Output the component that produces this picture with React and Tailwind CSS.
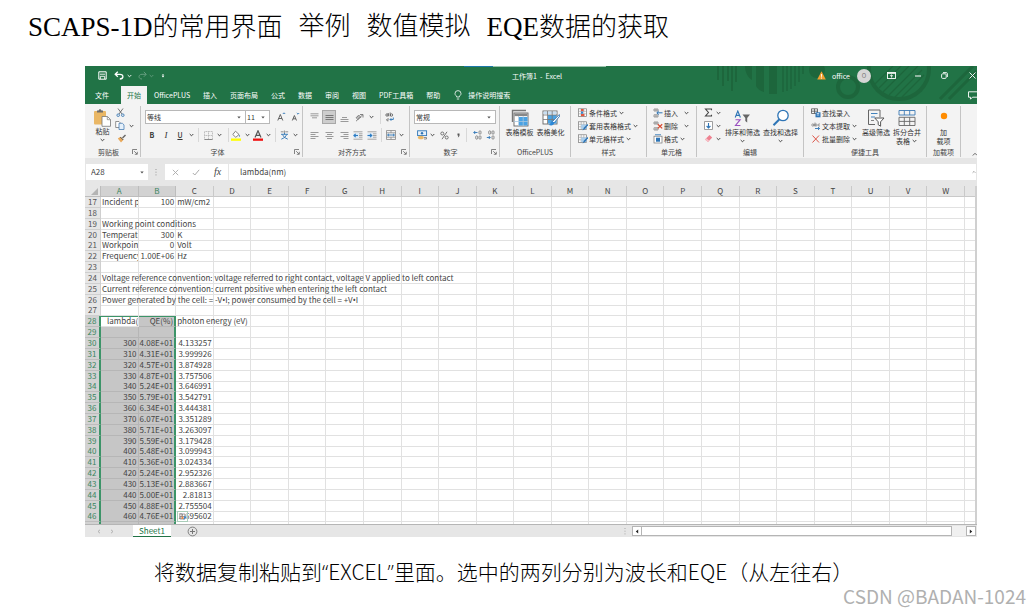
import React from "react";

const SHEET_FONT = "font-['Noto_Sans_CJK_SC','Noto_Sans',sans-serif]";

const COLUMNS = "ABCDEFGHIJKLMNOPQRSTUVW".split("");

const Dot = () => <span className="font-['Noto_Sans',sans-serif]">•</span>;

const ROWS = [
  { n: 17, a: "Incident p", b: "100", c: "mW/cm2" },
  { n: 18 },
  { n: 19, wide: "Working point conditions" },
  { n: 20, a: "Temperature", b: "300", c: "K" },
  { n: 21, a: "Workpoint", b: "0", c: "Volt" },
  { n: 22, a: "Frequency", b: "1.00E+06", c: "Hz" },
  { n: 23 },
  { n: 24, wide: "Voltage reference convention: voltage referred to right contact, voltage V applied to left contact" },
  { n: 25, wide: "Current reference convention: current positive when entering the left contact" },
  { n: 26, wide: <>Power generated by the cell: = -V<Dot />I; power consumed by the cell = +V<Dot />I</> },
  { n: 27 },
  { n: 28, a: "lambda(nm)", b: "QE(%)", c: "photon energy (eV)" },
  { n: 29 },
  ...[
    ["4.08", "4.133257"],
    ["4.31", "3.999926"],
    ["4.57", "3.874928"],
    ["4.87", "3.757506"],
    ["5.24", "3.646991"],
    ["5.79", "3.542791"],
    ["6.34", "3.444381"],
    ["6.07", "3.351289"],
    ["5.71", "3.263097"],
    ["5.59", "3.179428"],
    ["5.48", "3.099943"],
    ["5.36", "3.024334"],
    ["5.24", "2.952326"],
    ["5.13", "2.883667"],
    ["5.00", "2.81813"],
    ["4.88", "2.755504"],
    ["4.76", "2.695602"],
    ["4.66", "2.638249"],
  ].map(([b, c], i) => ({ n: 30 + i, a: String(300 + i * 10), b: b + "E+01", c, numeric: true })),
];

function Caret({ className = "w-2" }) {
  return (
    <span className={`flex shrink-0 justify-center ${className}`}>
      <svg width="5" height="4" viewBox="0 0 5 4" fill="none" stroke="currentColor" strokeWidth="0.9">
        <path d="M0.7 1 L2.5 2.8 L4.3 1" />
      </svg>
    </span>
  );
}

function Ico({ w = 10, h = 10, children, className = "" }) {
  return (
    <svg width={w} height={h} viewBox={`0 0 ${w} ${h}`} fill="none" className={`shrink-0 ${className}`} aria-hidden="true">
      {children}
    </svg>
  );
}

function IconButton({ label, className = "w-3.5", height = "h-3.5", children }) {
  return (
    <button type="button" aria-label={label} className={`flex shrink-0 items-center justify-center ${height} ${className}`}>
      {children}
    </button>
  );
}

function Group({ label, className, launcher, children }) {
  return (
    <section className={`flex shrink-0 flex-col border-r border-[#c4c4c4] ${className}`}>
      <div className="flex flex-1">{children}</div>
      <div className="flex h-2.5 items-center justify-center text-[#444]">
        <span className="flex-1 text-center whitespace-nowrap">{label}</span>
        {launcher && (
          <button type="button" aria-label={label + "设置"} className="mr-0.5">
            <Ico w={6} h={6}>
              <path d="M0.5 5V0.5H5M2.2 2.2L5 5M5.3 2.8V5.3H2.8" stroke="#666" strokeWidth="0.8" />
            </Ico>
          </button>
        )}
      </div>
    </section>
  );
}

function Divider({ className = "mx-0.5" }) {
  return <span className={`h-3.5 w-px shrink-0 bg-[#d8d8d8] ${className}`} />;
}

function Drop({ label, value, className }) {
  return (
    <div className={`relative flex h-3.5 items-center border border-[#b8b8b8] bg-white ${className}`}>
      <select aria-label={label} defaultValue={value} className="h-full w-full appearance-none bg-transparent pl-px text-[7px] leading-3 text-[#333] outline-none">
        <option>{value}</option>
      </select>
      <span className="pointer-events-none absolute right-1">
        <Ico w={4} h={3}>
          <path d="M0.3 0.6H3.7L2 2.5Z" fill="#555" />
        </Ico>
      </span>
    </div>
  );
}

function Lines({ widths, align = "start" }) {
  return (
    <Ico w={9} h={9}>
      {widths.map((w, i) => (
        <path key={i} d={`M${align === "start" ? 0.5 : align === "end" ? 8.5 - w : 4.5 - w / 2} ${1.5 + i * 2}h${w}`} stroke="#9a9a9a" strokeWidth="1" />
      ))}
    </Ico>
  );
}

function Indent({ flip }) {
  return (
    <Ico w={10} h={9}>
      <path d="M0.5 0.8H9.5M0.5 8.2H9.5M6 2.8H9.5M6 4.5H9.5M6 6.2H9.5" stroke="#9a9a9a" strokeWidth="0.9" />
      <rect x="0.5" y="2.2" width="5" height="4.6" fill="#d5e6f5" />
      <path d={flip ? "M0.5 4.5H4.5M3 2.8L4.8 4.5L3 6.2" : "M5 4.5H1M2.7 2.8L0.9 4.5L2.7 6.2"} stroke="#2b7cc4" strokeWidth="1.1" />
    </Ico>
  );
}

function TableIcon({ brush }) {
  return (
    <Ico w={18} h={18}>
      {!brush && <path d="M1.5 13V1.5H15" stroke="#777" strokeWidth="1.4" />}
      <rect x={brush ? 1 : 3} y={brush ? 2 : 4} width="14" height="13" fill="#fff" stroke="#666" strokeWidth="0.9" />
      <rect x={brush ? 1.5 : 3.5} y={brush ? 2.5 : 4.5} width="13" height="2.6" fill={brush ? "#c9dff2" : "#888"} />
      <rect x={brush ? 6 : 8} y={brush ? 6 : 8} width="8.5" height="8.5" fill="#4ba3e3" />
      <path d={brush ? "M5.5 2V15M10.2 2V15M1 6H15M1 10.5H15" : "M7.5 7V17M12.2 7V17M3 12.5H17"} stroke={brush ? "#777" : "#a8c6de"} strokeWidth="0.8" />
      {brush && (
        <>
          <path d="M17.3 5.5L10.5 12.5L12 14L17.8 7Z" fill="#fff" stroke="#3d7ab5" strokeWidth="0.9" />
          <path d="M10.5 12.2C8.5 12.5 9 15 6.5 15.8C9 17 12 16.5 12.2 14Z" fill="#2b88d8" />
        </>
      )}
    </Ico>
  );
}

function StyleIcon({ kind }) {
  return (
    <Ico w={10} h={10}>
      <rect x="0.5" y="0.8" width="8" height="7.6" fill="#fff" stroke="#777" strokeWidth="0.7" />
      <path d="M0.5 3.3H8.5M0.5 5.8H8.5M3.2 0.8V8.4M5.8 0.8V8.4" stroke="#999" strokeWidth="0.6" />
      {kind === "cond" ? (
        <>
          <path d="M3 1H5.6V3.2H3Z" fill="#e0563f" />
          <path d="M3 3.5H5V5.7H3Z" fill="#3b86cc" />
          <path d="M3 6H6.4V8.2H3Z" fill="#e0563f" />
        </>
      ) : (
        <>
          <path d="M3.2 3.5H8.5V8H3.2Z" fill="#a9cdec" />
          <path d="M9.7 2.8L5.8 6.8L4.6 9.4L7 8L9.9 4.2Z" fill="#2e75b6" />
        </>
      )}
    </Ico>
  );
}

function CellIcon({ kind }) {
  return (
    <Ico w={10} h={10}>
      {kind !== "format" && <path d="M1 1H5V3H1ZM1 6.8H5V9H1ZM3 1V3M3 6.8V9" stroke="#777" strokeWidth="0.7" />}
      {kind === "insert" && <path d="M9.5 4.8H4M5.8 3L3.8 4.8L5.8 6.6" stroke="#2e75b6" strokeWidth="1" />}
      {kind === "delete" && <path d="M4.8 3.2L9.2 7.4M9.2 3.2L4.8 7.4" stroke="#d9472b" strokeWidth="1.2" />}
      {kind === "format" && (
        <>
          <path d="M2 0.8H8" stroke="#2e75b6" strokeWidth="0.9" />
          <rect x="1" y="2.2" width="8" height="6.8" stroke="#777" strokeWidth="0.7" fill="#fff" />
          <rect x="3" y="3.7" width="4" height="4" fill="#2e75b6" />
        </>
      )}
    </Ico>
  );
}

function MenuRow({ icon, text, caret = true, caretClass }) {
  return (
    <button type="button" className="flex h-[13px] items-center whitespace-nowrap">
      {icon}
      <span className="ml-px">{text}</span>
      {caret && <Caret className={caretClass} />}
    </button>
  );
}

function BigButton({ icon, text, caret, className = "" }) {
  return (
    <button type="button" className={`flex flex-col items-center ${className}`}>
      <span className="flex h-5 items-center">{icon}</span>
      <span className="h-2 leading-2 whitespace-nowrap">{text}</span>
      {caret && <span className="flex h-2.5 items-center"><Caret /></span>}
    </button>
  );
}

function Backdrop() {
  return (
    <svg className="pointer-events-none absolute top-0 right-0" width="262" height="38" viewBox="0 0 262 38" fill="none" aria-hidden="true">
      <g stroke="#1d663c" strokeWidth="2">
        <path d="M3 0V14M8 0V20M13 0V15M17 0V25M21 0V16" />
      </g>
      <path d="M68 0V26M72 0V25M76 0V23M80 0V20M84 0V16M88 0V8" stroke="#1d663c" strokeWidth="1.5" />
      <path d="M30 0H37V14C33 12 30 6 30 0ZM41 0H49V26C45 25 42 22 41 20ZM54 0H62V28H54Z" fill="#1d663c" />
      <circle cx="102" cy="4" r="8" fill="#1d663c" />
      <circle cx="133" cy="21" r="10" stroke="#1d663c" strokeWidth="4" />
      <circle cx="184" cy="3" r="30" stroke="#1d663c" strokeWidth="4" />
      <g stroke="#1d663c" strokeWidth="1.2">
        <path d="M160 18L178 0M164 22L186 0M168 26L194 0M174 29L203 0M180 31L207 4M187 31L209 9" />
        <path d="M225 33L258 0M234 33L262 5" strokeWidth="3" />
      </g>
    </svg>
  );
}

function TitleBar() {
  return (
    <header className="relative flex h-[18px] items-center pt-px text-white">
      <div className="flex flex-1 items-center pl-3">
        <IconButton label="保存" className="w-2.5">
          <Ico w={9} h={9}>
            <path d="M0.8 0.8H8.2V8.2H0.8Z" stroke="#fff" />
            <path d="M2.3 8V5.3H6.7V8M2 3.2H7" stroke="#fff" strokeWidth="0.9" />
          </Ico>
        </IconButton>
        <IconButton label="撤消" className="ml-1.5 w-3">
          <Ico w={10} h={9}>
            <path d="M3.8 0.8L1.2 3.3L3.8 5.8M1.4 3.3H6C10 3.3 9.8 8 5.8 8" stroke="#fff" strokeWidth="1.3" />
          </Ico>
        </IconButton>
        <Caret className="w-2" />
        <IconButton label="恢复" className="ml-1 w-2.5 opacity-30">
          <Ico w={9} h={9}>
            <path d="M5.8 0.8L8.3 3.3L5.8 5.8M8 3.3H4C0 3.3 0 8 4 8" stroke="#fff" />
          </Ico>
        </IconButton>
        <Caret className="w-2 opacity-30" />
        <IconButton label="自定义快速访问工具栏" className="ml-1 w-2">
          <Ico w={4} h={4}>
            <path d="M1 0.5H3M1 1.8H3L2 3.2Z" stroke="#fff" strokeWidth="0.5" fill="#fff" />
          </Ico>
        </IconButton>
      </div>
      <div className="absolute top-0 left-[379px] h-px w-[29px] bg-[#1b78a8]" />
      <div className="absolute top-0 left-[408px] h-px w-[113px] bg-[#9cc5ae]" />
      <h2 className="text-[7px] whitespace-pre">工作簿1  -  Excel</h2>
      <div className="relative flex flex-1 items-center justify-end">
        <Ico w={9} h={9}>
          <path d="M4.5 0.3L8.8 8.5H0.2Z" fill="#f0a030" />
          <path d="M4.5 3V5.8M4.5 6.5V7.6" stroke="#fff" strokeWidth="0.9" />
        </Ico>
        <span className="ml-1.5 w-[21px] text-[7px]">office</span>
        <span className="ml-1 flex size-3.5 items-center justify-center rounded-full bg-[#d6d6d6] text-[6px] text-[#777]">O</span>
        <IconButton label="功能区显示选项" className="ml-3.5 w-3">
          <Ico w={9} h={7}>
            <rect x="0.5" y="0.5" width="8" height="6" stroke="#fff" strokeWidth="0.9" />
            <path d="M0.5 1.5H8.5M4.5 5.6V3M3 4.2L4.5 2.8L6 4.2" stroke="#fff" strokeWidth="0.8" />
          </Ico>
        </IconButton>
        <IconButton label="最小化" className="ml-3.5 w-3.5">
          <Ico w={6} h={2}><path d="M0 1H6" stroke="#fff" /></Ico>
        </IconButton>
        <IconButton label="向下还原" className="ml-3 w-3.5">
          <Ico w={7} h={7}>
            <rect x="0.6" y="1.8" width="4.6" height="4.6" rx="1" stroke="#fff" strokeWidth="0.9" />
            <path d="M2 0.6H5.2Q6.4 0.6 6.4 1.8V5" stroke="#fff" strokeWidth="0.9" />
          </Ico>
        </IconButton>
        <IconButton label="关闭" className="ml-4 w-2.5">
          <Ico w={7} h={7}><path d="M0.5 0.5L6.5 6.5M6.5 0.5L0.5 6.5" stroke="#fff" strokeWidth="0.9" /></Ico>
        </IconButton>
      </div>
    </header>
  );
}

function Tabs() {
  const rest = ["OfficePLUS", "插入", "页面布局", "公式", "数据", "审阅", "视图", "PDF工具箱", "帮助"];
  return (
    <nav className="relative flex h-5 items-stretch pt-0.5 text-white">
      <button type="button" className="w-9 pr-0.5">文件</button>
      <button type="button" className="mr-px w-[26px] bg-[#f3f3f3] text-[#217346]">开始</button>
      <div className="flex gap-px">
        {rest.map((t) => (
          <button type="button" key={t} className="px-1.5 whitespace-nowrap">{t}</button>
        ))}
      </div>
      <button type="button" className="ml-2 flex items-center gap-1.5 whitespace-nowrap">
        <Ico w={8} h={10}>
          <path d="M2.6 7V6.2C1.6 5.5 1 4.7 1 3.6A3 3 0 0 1 7 3.6C7 4.7 6.4 5.5 5.4 6.2V7ZM2.8 9H5.2" stroke="#fff" strokeWidth="0.8" />
        </Ico>
        操作说明搜索
      </button>
      <button type="button" aria-label="批注" className="ml-auto">
        <Ico w={9} h={9}><path d="M0.5 0.8H9M0.5 0.8V6.2H2.5V8.2L4.5 6.2H9" stroke="#fff" strokeWidth="0.9" /></Ico>
      </button>
    </nav>
  );
}

function Ribbon() {
  return (
    <div className="flex h-[54px] overflow-hidden bg-[#f3f3f3] pt-0.5 pb-px text-[#333]">
      <Group label="剪贴板" launcher className="w-14">
        <BigButton
          className="ml-2 w-[19px] pt-px"
          text="粘贴"
          caret
          icon={
            <Ico w={19} h={19}>
              <rect x="1" y="3" width="12" height="13.5" rx="1" fill="#eab765" />
              <path d="M4 4.5V2.5H5.5Q7 -0.5 8.5 2.5H10V4.5Z" fill="#6c6c6c" />
              <path d="M9 8.5H14.5L17.5 11.5V18.3H9Z" fill="#fff" stroke="#777" strokeWidth="0.8" />
              <path d="M14.3 8.7V11.7H17.3" stroke="#777" strokeWidth="0.7" />
            </Ico>
          }
        />
        <div className="ml-[3px] flex flex-col">
          <IconButton label="剪切" height="h-[13px]" className="w-2.5">
            <Ico w={9} h={9}>
              <path d="M2 0.5L6 6M7 0.5L3 6" stroke="#666" strokeWidth="0.9" />
              <circle cx="2.2" cy="7.2" r="1.3" stroke="#3d7ab5" strokeWidth="0.9" />
              <circle cx="6.8" cy="7.2" r="1.3" stroke="#3d7ab5" strokeWidth="0.9" />
            </Ico>
          </IconButton>
          <IconButton label="复制" height="h-[13px]" className="w-5 gap-0.5">
            <Ico w={10} h={9}>
              <path d="M0.7 0.5H4L5 1.5V6.5H0.7Z" fill="#fff" stroke="#777" strokeWidth="0.8" />
              <path d="M4 2.3H7.4L9 3.9V8.5H4Z" fill="#e5f0fa" stroke="#4a7fb5" strokeWidth="0.8" />
            </Ico>
            <Caret />
          </IconButton>
          <IconButton label="格式刷" height="h-[13px]" className="w-3">
            <Ico w={9} h={9}>
              <path d="M8.5 1L5.5 4" stroke="#666" strokeWidth="1.5" />
              <path d="M3.5 2.8L6.5 5.8L4 8.5L0.8 4.6Z" fill="#e8a85a" />
              <path d="M3.3 3L6.3 6" stroke="#555" />
            </Ico>
          </IconButton>
        </div>
      </Group>

      <Group label="字体" launcher className="w-[162px]">
        <div className="flex flex-col gap-1 pt-1 pl-1">
          <div className="flex items-center">
            <Drop label="字体" value="等线" className="w-[101px]" />
            <Drop label="字号" value="11" className="w-6 border-l-0" />
            <IconButton label="增大字号" className="ml-1 w-3.5">
              <Ico w={9} h={10}>
                <path d="M0.8 8.5L3.3 2.5L5.8 8.5M1.7 6.5H4.9" stroke="#555" strokeWidth="0.9" />
                <path d="M5.8 2L7 0.8L8.2 2" stroke="#2e75b6" strokeWidth="0.9" />
              </Ico>
            </IconButton>
            <IconButton label="减小字号">
              <Ico w={9} h={10}>
                <path d="M1.3 8.5L3.4 3.5L5.5 8.5M2 6.8H4.8" stroke="#555" strokeWidth="0.9" />
                <path d="M5.8 1L7 2.2L8.2 1" stroke="#2e75b6" strokeWidth="0.9" />
              </Ico>
            </IconButton>
          </div>
          <div className="flex items-center">
            <IconButton label="加粗"><b>B</b></IconButton>
            <IconButton label="倾斜"><i className="font-['Liberation_Serif',serif] text-[9px]">I</i></IconButton>
            <IconButton label="下划线"><u className="font-medium">U</u></IconButton>
            <Caret />
            <Divider className="mx-[3px]" />
            <IconButton label="边框" className="w-3">
              <Ico w={9} h={9}>
                <path d="M0.5 0.5H8.5V8.5H0.5ZM4.5 0.5V8.5M0.5 4.5H8.5" stroke="#aaa" strokeWidth="0.8" strokeDasharray="1 0.6" />
                <path d="M0.5 8.5H8.5" stroke="#777" strokeWidth="0.8" />
              </Ico>
            </IconButton>
            <Caret className="w-2.5" />
            <Divider className="mr-0.5 ml-1" />
            <IconButton label="填充颜色" className="w-2.5">
              <Ico w={10} h={11}>
                <path d="M4.5 1.2L8 4.5L4.8 7.3L1.8 4.5Z" fill="#fff" stroke="#666" strokeWidth="0.8" />
                <path d="M8.3 4.2Q9.8 6.5 8.6 7Q7.8 6.7 8.3 4.2" fill="#2e75b6" />
                <rect y="8.5" width="10" height="2.3" fill="#ffff00" />
              </Ico>
            </IconButton>
            <Caret className="w-3" />
            <IconButton label="字体颜色" className="w-2.5">
              <Ico w={10} h={11}>
                <path d="M2 7.5L5 0.8L8 7.5M3 5.3H7" stroke="#555" strokeWidth="1.2" />
                <rect y="8.5" width="10" height="2.3" fill="#f01010" />
              </Ico>
            </IconButton>
            <Caret className="w-2.5" />
            <Divider className="mr-px ml-0.5" />
            <IconButton label="拼音" className="ml-0.5 w-2.5">
              <Ico w={9} h={10}>
                <path d="M0.8 1.8H3.5M5.3 1.8H8.2M4.4 0.5V3" stroke="#777" strokeWidth="0.8" />
                <path d="M1 4.3H8M4.5 3V4.3M6.8 4.5Q5.5 8 1.3 9.2M2.4 4.5Q3.8 8 7.8 9.2" stroke="#2e75b6" strokeWidth="0.9" />
              </Ico>
            </IconButton>
            <Caret className="w-3" />
          </div>
        </div>
      </Group>

      <Group label="对齐方式" launcher className="w-[107px]">
        <div className="flex flex-col gap-1 pt-1 pl-1">
          <div className="flex items-center gap-px">
            <IconButton label="顶端对齐"><Ico w={9} h={9}><path d="M0.5 0.8H8.5M0.5 2.8H8.5M2 4.8H7" stroke="#9a9a9a" /></Ico></IconButton>
            <IconButton label="垂直居中" className="w-3.5 border border-[#a8a8a8] bg-[#cdcdcd]"><Ico w={9} h={9}><path d="M0.5 2.5H8.5M0.5 4.5H8.5M0.5 6.5H8.5" stroke="#777" /></Ico></IconButton>
            <IconButton label="底端对齐"><Ico w={9} h={9}><path d="M2 4.5H7M0.5 6.5H8.5M0.5 8.5H8.5" stroke="#9a9a9a" /></Ico></IconButton>
            <IconButton label="方向">
              <Ico w={9} h={9}>
                <path d="M1 8.2L8 1.5M8 4.5V1.5H5M1 4.8L3.8 2L6 5" stroke="#777" strokeWidth="0.9" />
                <circle cx="3" cy="5" r="1.3" stroke="#777" strokeWidth="0.8" />
              </Ico>
            </IconButton>
            <Caret className="w-2" />
            <Divider className="mr-0.5 ml-1" />
            <IconButton label="自动换行" className="w-2.5">
              <Ico w={9} h={10}>
                <circle cx="2" cy="3" r="1.2" stroke="#555" strokeWidth="0.8" />
                <path d="M3.3 1V4.3M5.2 0.5V4.3M4 7H2.2Q1 7.8 2.2 8.8H3.5" stroke="#555" strokeWidth="0.8" />
                <circle cx="6.5" cy="3" r="1.2" stroke="#555" strokeWidth="0.8" />
                <path d="M8.3 5.5V7.5H5M6.3 6.2L5 7.5L6.3 8.8" stroke="#2e75b6" strokeWidth="0.9" />
              </Ico>
            </IconButton>
          </div>
          <div className="flex items-center gap-px">
            <IconButton label="左对齐"><Lines widths={[8, 5, 8, 5]} /></IconButton>
            <IconButton label="居中"><Lines widths={[8, 5, 8, 5]} align="center" /></IconButton>
            <IconButton label="右对齐"><Lines widths={[8, 5, 8, 5]} align="end" /></IconButton>
            <IconButton label="减少缩进量" className="w-3"><Indent /></IconButton>
            <IconButton label="增加缩进量" className="w-3.5"><Indent flip /></IconButton>
            <Divider className="mr-0 ml-px" />
            <IconButton label="合并后居中" className="ml-[3px] w-2.5">
              <Ico w={10} h={10}>
                <path d="M0.5 0.5H9.5V9.5H0.5ZM0.5 2.8H9.5M0.5 7.2H9.5M5 0.5V2.8M5 7.2V9.5" stroke="#888" strokeWidth="0.8" />
                <path d="M1.5 5H8.5M3 3.8L1.6 5L3 6.2M7 3.8L8.4 5L7 6.2" stroke="#2e75b6" strokeWidth="0.9" />
              </Ico>
            </IconButton>
            <Caret className="w-2" />
          </div>
        </div>
      </Group>

      <Group label="数字" launcher className="w-[90px]">
        <div className="flex flex-col gap-1 pt-1 pl-1">
          <Drop label="数字格式" value="常规" className="w-[82px]" />
          <div className="flex items-center">
            <IconButton label="会计数字格式" className="ml-0.5 w-3">
              <Ico w={11} h={10}>
                <rect x="0.6" y="0.8" width="9" height="4.8" fill="#e6f1fa" stroke="#2e75b6" strokeWidth="0.9" />
                <circle cx="5" cy="3.2" r="1.2" fill="#2e75b6" />
                <ellipse cx="3.8" cy="7.5" rx="3" ry="1.8" fill="#eab765" />
                <path d="M7 7.5H9.5V9H7" stroke="#777" strokeWidth="0.8" />
              </Ico>
            </IconButton>
            <Caret className="w-2" />
            <IconButton label="百分比样式" className="w-4">
              <Ico w={9} h={9}>
                <circle cx="2.3" cy="2.5" r="1.5" stroke="#666" strokeWidth="0.9" />
                <circle cx="6.7" cy="6.5" r="1.5" stroke="#666" strokeWidth="0.9" />
                <path d="M7 0.8L2 8.2" stroke="#666" strokeWidth="0.9" />
              </Ico>
            </IconButton>
            <IconButton label="千位分隔样式" className="w-3">
              <Ico w={3} h={5}><path d="M0.5 0.5H2.5V2.5Q2.3 4 0.8 4.6Q1.4 3.6 1.3 2.5H0.5Z" fill="#555" /></Ico>
            </IconButton>
            <Divider className="mr-1 ml-0.5" />
            <IconButton label="增加小数位数" className="w-3">
              <Ico w={9} h={10}>
                <path d="M4.5 2.5H0.8M2.2 1L0.8 2.5L2.2 4" stroke="#2e75b6" strokeWidth="0.9" />
                <rect x="6" y="0.8" width="2" height="3.4" rx="1" stroke="#777" strokeWidth="0.8" />
                <rect x="2.7" y="5.8" width="2" height="3.4" rx="1" stroke="#777" strokeWidth="0.8" />
                <rect x="6" y="5.8" width="2" height="3.4" rx="1" stroke="#777" strokeWidth="0.8" />
              </Ico>
            </IconButton>
            <IconButton label="减少小数位数" className="w-3.5">
              <Ico w={9} h={10}>
                <rect x="2.7" y="0.8" width="2" height="3.4" rx="1" stroke="#777" strokeWidth="0.8" />
                <rect x="6" y="0.8" width="2" height="3.4" rx="1" stroke="#777" strokeWidth="0.8" />
                <path d="M0.8 7.5H4.2M2.8 6L4.2 7.5L2.8 9" stroke="#2e75b6" strokeWidth="0.9" />
                <rect x="6" y="5.8" width="2" height="3.4" rx="1" stroke="#777" strokeWidth="0.8" />
              </Ico>
            </IconButton>
          </div>
        </div>
      </Group>

      <Group label="OfficePLUS" className="w-[71px]">
        <div className="flex flex-1 justify-center gap-[3px] pt-0.5">
          <BigButton text="表格模板" icon={<TableIcon />} />
          <BigButton text="表格美化" icon={<TableIcon brush />} />
        </div>
      </Group>

      <Group label="样式" className="w-[76px]">
        <div className="flex flex-col items-start pl-[7px]">
          <MenuRow icon={<StyleIcon kind="cond" />} text="条件格式" />
          <MenuRow icon={<StyleIcon />} text="套用表格格式" />
          <MenuRow icon={<StyleIcon />} text="单元格样式" />
        </div>
      </Group>

      <Group label="单元格" className="w-[50px]">
        <div className="flex flex-col items-start pl-1.5">
          <MenuRow icon={<CellIcon kind="insert" />} text="插入" caretClass="ml-1 w-2" />
          <MenuRow icon={<CellIcon kind="delete" />} text="删除" caretClass="ml-1 w-2" />
          <MenuRow icon={<CellIcon kind="format" />} text="格式" />
        </div>
      </Group>

      <Group label="编辑" className="w-[107px]">
        <div className="flex flex-col pl-1.5">
          <IconButton label="自动求和" height="h-[13px]" className="w-5 gap-0.5">
            <Ico w={9} h={9}><path d="M7.5 2.2V1H1.5L4.5 4.5L1.5 8H7.5V6.8" stroke="#444" strokeWidth="1.1" /></Ico>
            <Caret />
          </IconButton>
          <IconButton label="填充" height="h-[13px]" className="w-5 gap-0.5">
            <Ico w={9} h={9}>
              <rect x="0.6" y="0.6" width="7.8" height="7.8" fill="#fff" stroke="#888" strokeWidth="0.8" />
              <path d="M4.5 2V6.8M2.6 5L4.5 6.9L6.4 5" stroke="#2e75b6" strokeWidth="1.1" />
            </Ico>
            <Caret />
          </IconButton>
          <IconButton label="清除" height="h-[13px]" className="w-5 gap-0.5">
            <Ico w={9} h={9}>
              <path d="M5.5 1L8.2 3.5L4 8L1 5.5Z" fill="#ee8291" />
              <path d="M1 5.5L2.4 4.2L5.2 6.8L4 8Z" fill="#f8c2ca" />
            </Ico>
            <Caret />
          </IconButton>
        </div>
        <div className="flex gap-[3px] pt-0.5 pl-0.5">
          <BigButton
            text="排序和筛选"
            caret
            icon={
              <Ico w={17} h={17}>
                <path d="M1.2 7.5L3.8 1L6.4 7.5M2.1 5.4H5.5" stroke="#2e75b6" strokeWidth="1.1" />
                <path d="M1.5 9.7H6.2L1.5 15.5H6.4" stroke="#9a4fc0" strokeWidth="1.1" />
                <path d="M8.5 4.5H16L13.2 8V12.5L11.3 11V8Z" fill="#666" />
              </Ico>
            }
          />
          <BigButton
            text="查找和选择"
            caret
            icon={
              <Ico w={18} h={18}>
                <circle cx="11" cy="6.5" r="5.2" stroke="#2e75b6" strokeWidth="1.3" fill="#fff" />
                <path d="M7.2 10.5L1.5 16.3" stroke="#2e75b6" strokeWidth="2" />
              </Ico>
            }
          />
        </div>
      </Group>

      <Group label="便捷工具" className="w-[123px]">
        <div className="flex w-[58px] flex-col items-start pl-[7px]">
          <MenuRow
            text="查找录入"
            caret={false}
            icon={
              <Ico w={10} h={10}>
                <path d="M0.5 0.8H6.5V5.5H0.5ZM3.5 0.8V5.5M0.5 3.2H6.5" stroke="#555" strokeWidth="0.8" />
                <rect x="4.5" y="4.3" width="5" height="5" fill="#2e75b6" />
                <path d="M5.8 5.5H8.2M5.8 7H8.2" stroke="#fff" strokeWidth="0.7" />
              </Ico>
            }
          />
          <MenuRow
            text="文本提取"
            icon={
              <Ico w={10} h={10}>
                <circle cx="1.8" cy="4" r="1.1" stroke="#777" strokeWidth="0.7" />
                <circle cx="5" cy="4" r="1.1" stroke="#777" strokeWidth="0.7" />
                <path d="M3.1 2.8V5.3M4 1.5V5.3M9 3Q7 2.5 7 4Q7 5.5 9 5" stroke="#777" strokeWidth="0.7" />
                <path d="M4 7.5H8.5M7 6L8.6 7.5L7 9" stroke="#2e75b6" strokeWidth="0.9" />
              </Ico>
            }
          />
          <MenuRow
            text="批量删除"
            icon={<Ico w={10} h={10}><path d="M1.5 1.5L8 8.5M8 1.5L1.5 8.5" stroke="#dd5548" strokeWidth="1" /></Ico>}
          />
        </div>
        <div className="flex gap-[3px] pt-0.5">
          <BigButton
            text="高级筛选"
            icon={
              <Ico w={18} h={18}>
                <path d="M1.5 1H13V8M1.5 1V15.5H8" stroke="#666" strokeWidth="1" />
                <path d="M4 4.5H10.5M4 8H8" stroke="#2e75b6" strokeWidth="0.9" />
                <path d="M4 11.5H7" stroke="#777" strokeWidth="0.9" />
                <path d="M7.8 9H17L13.6 12.8V17.2L11.2 15.7V12.8Z" fill="#fff" stroke="#555" strokeWidth="1" />
              </Ico>
            }
          />
          <button type="button" className="flex flex-col items-center">
            <span className="flex h-5 items-center">
              <Ico w={18} h={18}>
                <path d="M1 1.5H17V6H1ZM6.3 1.5V6M11.7 1.5V6" stroke="#3d7ab5" strokeWidth="0.9" />
                <path d="M1 8.3H17V16.5H1ZM1 12.4H17M6.3 8.3V16.5M11.7 8.3V16.5" stroke="#666" strokeWidth="0.9" />
              </Ico>
            </span>
            <span className="h-2 leading-2 whitespace-nowrap">拆分合并</span>
            <span className="flex h-2.5 items-center">表格<Caret /></span>
          </button>
        </div>
      </Group>

      <Group label="加载项" className="w-[34px]">
        <button type="button" className="flex flex-1 flex-col items-center pt-0.5">
          <span className="flex h-5 items-center pb-1">
            <Ico w={8} h={8}><circle cx="4" cy="4" r="3.2" fill="#ff8c00" /></Ico>
          </span>
          <span className="h-2 leading-2">加</span>
          <span className="h-2.5">载项</span>
        </button>
      </Group>
      <div className="flex flex-1 items-end justify-end">
        <button type="button" aria-label="折叠功能区">
          <Ico w={5} h={5}><path d="M0.8 3.5L3 1.3L5 3.3" stroke="#555" strokeWidth="0.9" /></Ico>
        </button>
      </div>
    </div>
  );
}

function FormulaBar() {
  return (
    <div className={`flex h-7 items-center bg-[#e6e6e6] px-px ${SHEET_FONT}`}>
      <div className="relative flex h-4 w-[62px] items-center bg-white">
        <input aria-label="名称框" defaultValue="A28" className="w-full bg-transparent pl-[5px] text-[8px] leading-3 text-[#444] outline-none" />
        <span className="absolute right-1"><Ico w={4} h={3}><path d="M0.3 0.6H3.7L2 2.5Z" fill="#555" /></Ico></span>
      </div>
      <Ico w={2} h={8} className="ml-[7px]"><path d="M1 1V2M1 3.7V4.7M1 6.4V7.4" stroke="#999" /></Ico>
      <div className="ml-2 flex h-4 w-[63px] items-center justify-around bg-white">
        <button type="button" aria-label="取消"><Ico w={7} h={7}><path d="M0.8 0.8L6.2 6.2M6.2 0.8L0.8 6.2" stroke="#aaa" strokeWidth="0.9" /></Ico></button>
        <button type="button" aria-label="输入"><Ico w={8} h={7}><path d="M0.8 4L2.8 6L7.2 0.8" stroke="#aaa" strokeWidth="1" /></Ico></button>
        <button type="button" aria-label="插入函数" className="font-['Liberation_Serif',serif] text-[10px] leading-3 text-[#444] italic">fx</button>
      </div>
      <div className="ml-px flex h-4 flex-1 items-center bg-white">
        <input aria-label="编辑栏" defaultValue="lambda(nm)" className="w-full bg-transparent pl-[11px] text-[8px] leading-3 text-[#444] outline-none" />
        <Caret className="w-1 rotate-180 text-[#888]" />
      </div>
    </div>
  );
}

const ROW_GRID = "grid grid-cols-[16px_repeat(23,minmax(0,1fr))_10px]";
const CELL = "relative border-r border-b border-[#e1e1e1] px-px whitespace-nowrap";

function Row({ row }) {
  const selected = row.n >= 28;
  const fill = selected ? "bg-[#c6c6c6] !border-b-[#b6b6b6]" : "";
  const alignA = row.numeric ? "text-right" : "text-left";
  return (
    <tr className={`${ROW_GRID} min-h-0 flex-1`}>
      <th scope="row" className={`border-b text-center font-normal ${selected ? "border-r-2 border-[#bdbdbd] border-r-[#3c9468] bg-[#d2d2d2] text-[#3c8560]" : "border-r border-[#cfcfcf] bg-[#e6e6e6] text-[#555]"}`}>
        {row.n}
      </th>
      {row.wide ? (
        <td className={`${CELL} overflow-visible`}><span className="relative z-10">{row.wide}</span></td>
      ) : (
        <td className={`${CELL} overflow-hidden ${alignA} ${row.n === 28 ? "pl-1.5" : fill} ${selected && row.n !== 28 ? "!border-r-[#b6b6b6]" : ""}`}>
          {row.a}
          {row.n === 28 && <span className="absolute inset-x-0 top-0 h-px bg-[#3c9468]" />}
        </td>
      )}
      <td className={`${CELL} text-right ${fill} ${selected ? "border-r-2 !border-r-[#3c9468]" : ""}`}>
        {row.b}
        {row.n === 28 && <span className="absolute inset-x-0 top-0 h-px bg-[#3c9468]" />}
      </td>
      <td className={`${CELL} ${row.numeric ? "text-right" : "text-left"}`}>
        {row.c}
        {row.n === 46 && (
          <button type="button" aria-label="快速分析" className="absolute top-0 left-px flex size-[11px] items-center justify-center border border-[#a9cdb9] bg-white/50">
            <Ico w={8} h={8}>
              <path d="M0.8 1H6V6H0.8ZM0.8 3.5H6M3.4 1V6" stroke="#777" strokeWidth="0.7" />
              <path d="M2.5 3.5H4.5V6H2.5Z" fill="#e08a4a" />
              <path d="M5.5 2.5L7.5 4.5L4.5 7Z" fill="#3b86cc" />
            </Ico>
          </button>
        )}
      </td>
      {COLUMNS.slice(3).map((c) => (
        <td key={c} className={CELL} />
      ))}
      <td className="border-b border-[#e1e1e1]" />
    </tr>
  );
}

function Sheet() {
  return (
    <div className={`h-[338px] overflow-hidden border-r-2 border-[#d0d0d0] bg-white text-[8px] leading-2.5 text-[#444] ${SHEET_FONT}`}>
      <table className="flex h-[347px] flex-col">
        <thead className="block">
          <tr className={`${ROW_GRID} h-[11px] bg-[#e6e6e6]`}>
            <th className="flex items-end justify-end border-r border-b border-[#bdbdbd] pr-0.5 pb-px">
              <Ico w={7} h={7}><path d="M7 0V7H0Z" fill="#b4b4b4" /></Ico>
            </th>
            {COLUMNS.map((c, i) => (
              <th key={c} scope="col" className={`border-r border-b text-center font-normal ${i < 2 ? "border-[#bdbdbd] bg-[#d2d2d2] text-[#3c8560]" : "border-[#c9c9c9]"}`}>{c}</th>
            ))}
            <th className="border-b border-[#c9c9c9]" />
          </tr>
        </thead>
        <tbody className="flex min-h-0 flex-1 flex-col">
          {ROWS.map((r) => <Row key={r.n} row={r} />)}
        </tbody>
      </table>
    </div>
  );
}

function SheetBar() {
  return (
    <footer className={`flex h-[13px] items-center border-t border-[#b5b5b5] bg-[#e6e6e6] ${SHEET_FONT}`}>
      <button type="button" aria-label="上一张" className="ml-3"><Ico w={4} h={5}><path d="M3 0.8L1 2.5L3 4.2" stroke="#aaa" strokeWidth="0.9" /></Ico></button>
      <button type="button" aria-label="下一张" className="ml-[9px]"><Ico w={4} h={5}><path d="M1 0.8L3 2.5L1 4.2" stroke="#aaa" strokeWidth="0.9" /></Ico></button>
      <button type="button" className="ml-[19px] h-3 w-[38px] border-b border-[#217346] bg-white text-[8px] leading-2.5 text-[#217346]">Sheet1</button>
      <button type="button" aria-label="新工作表" className="ml-4">
        <Ico w={11} h={11}>
          <circle cx="5.5" cy="5.5" r="4.4" stroke="#777" strokeWidth="0.9" />
          <path d="M3 5.5H8M5.5 3V8" stroke="#777" />
        </Ico>
      </button>
      <span className="flex-1" />
      <Ico w={2} h={8}><path d="M1 1V2M1 3.7V4.7M1 6.4V7.4" stroke="#aaa" /></Ico>
      <div className="ml-1.5 flex h-2.5 w-[344px] items-stretch bg-[#f0f0f0]">
        <button type="button" aria-label="向左滚动" className="flex w-2.5 items-center justify-center border border-[#b5b5b5] bg-white">
          <Ico w={4} h={5}><path d="M3.2 0.5V4.5L0.8 2.5Z" fill="#222" /></Ico>
        </button>
        <div className="flex-1 border border-l-0 border-[#b5b5b5] bg-white" />
        <div className="w-3.5" />
        <button type="button" aria-label="向右滚动" className="flex w-2.5 items-center justify-center border border-[#b5b5b5] bg-white">
          <Ico w={4} h={5}><path d="M0.8 0.5V4.5L3.2 2.5Z" fill="#222" /></Ico>
        </button>
      </div>
      <span className="w-px" />
    </footer>
  );
}

export default function App() {
  return (
    <main className="relative min-h-screen overflow-hidden bg-white font-['Noto_Sans_CJK_SC',sans-serif]">
      <h1 className="flex h-[66px] gap-4 pt-[11px] pl-7 font-['Liberation_Serif','Noto_Sans_CJK_SC',serif] text-[26px] leading-8 font-light whitespace-nowrap text-black">
        <span><span className="text-[27px] font-normal">SCAPS-1D</span>的常用界面</span>{" "}
        <span>举例</span>{" "}
        <span>数值模拟</span>{" "}
        <span><span className="text-[27px] font-normal">EQE</span>数据的获取</span>
      </h1>
      <div className="mr-[53px] ml-[85px] overflow-hidden text-[7px] leading-2.5">
        <div className="relative bg-[#217346]">
          <Backdrop />
          <TitleBar />
          <Tabs />
        </div>
        <Ribbon />
        <FormulaBar />
        <Sheet />
        <SheetBar />
      </div>
      <p className="pt-[22px] pl-[154px] text-[21px] leading-6 font-light whitespace-nowrap text-black">
        将数据复制粘贴到<span className="font-['Open_Sans',sans-serif]">“</span>EXCEL<span className="font-['Open_Sans',sans-serif]">”</span>里面。选中的两列分别为波长和EQE（从左往右）
      </p>
      <span className="absolute right-1 bottom-[7px] text-[19px] leading-6 text-[#b0b0b0]">
        CSDN @BADAN-1024
      </span>
    </main>
  );
}
